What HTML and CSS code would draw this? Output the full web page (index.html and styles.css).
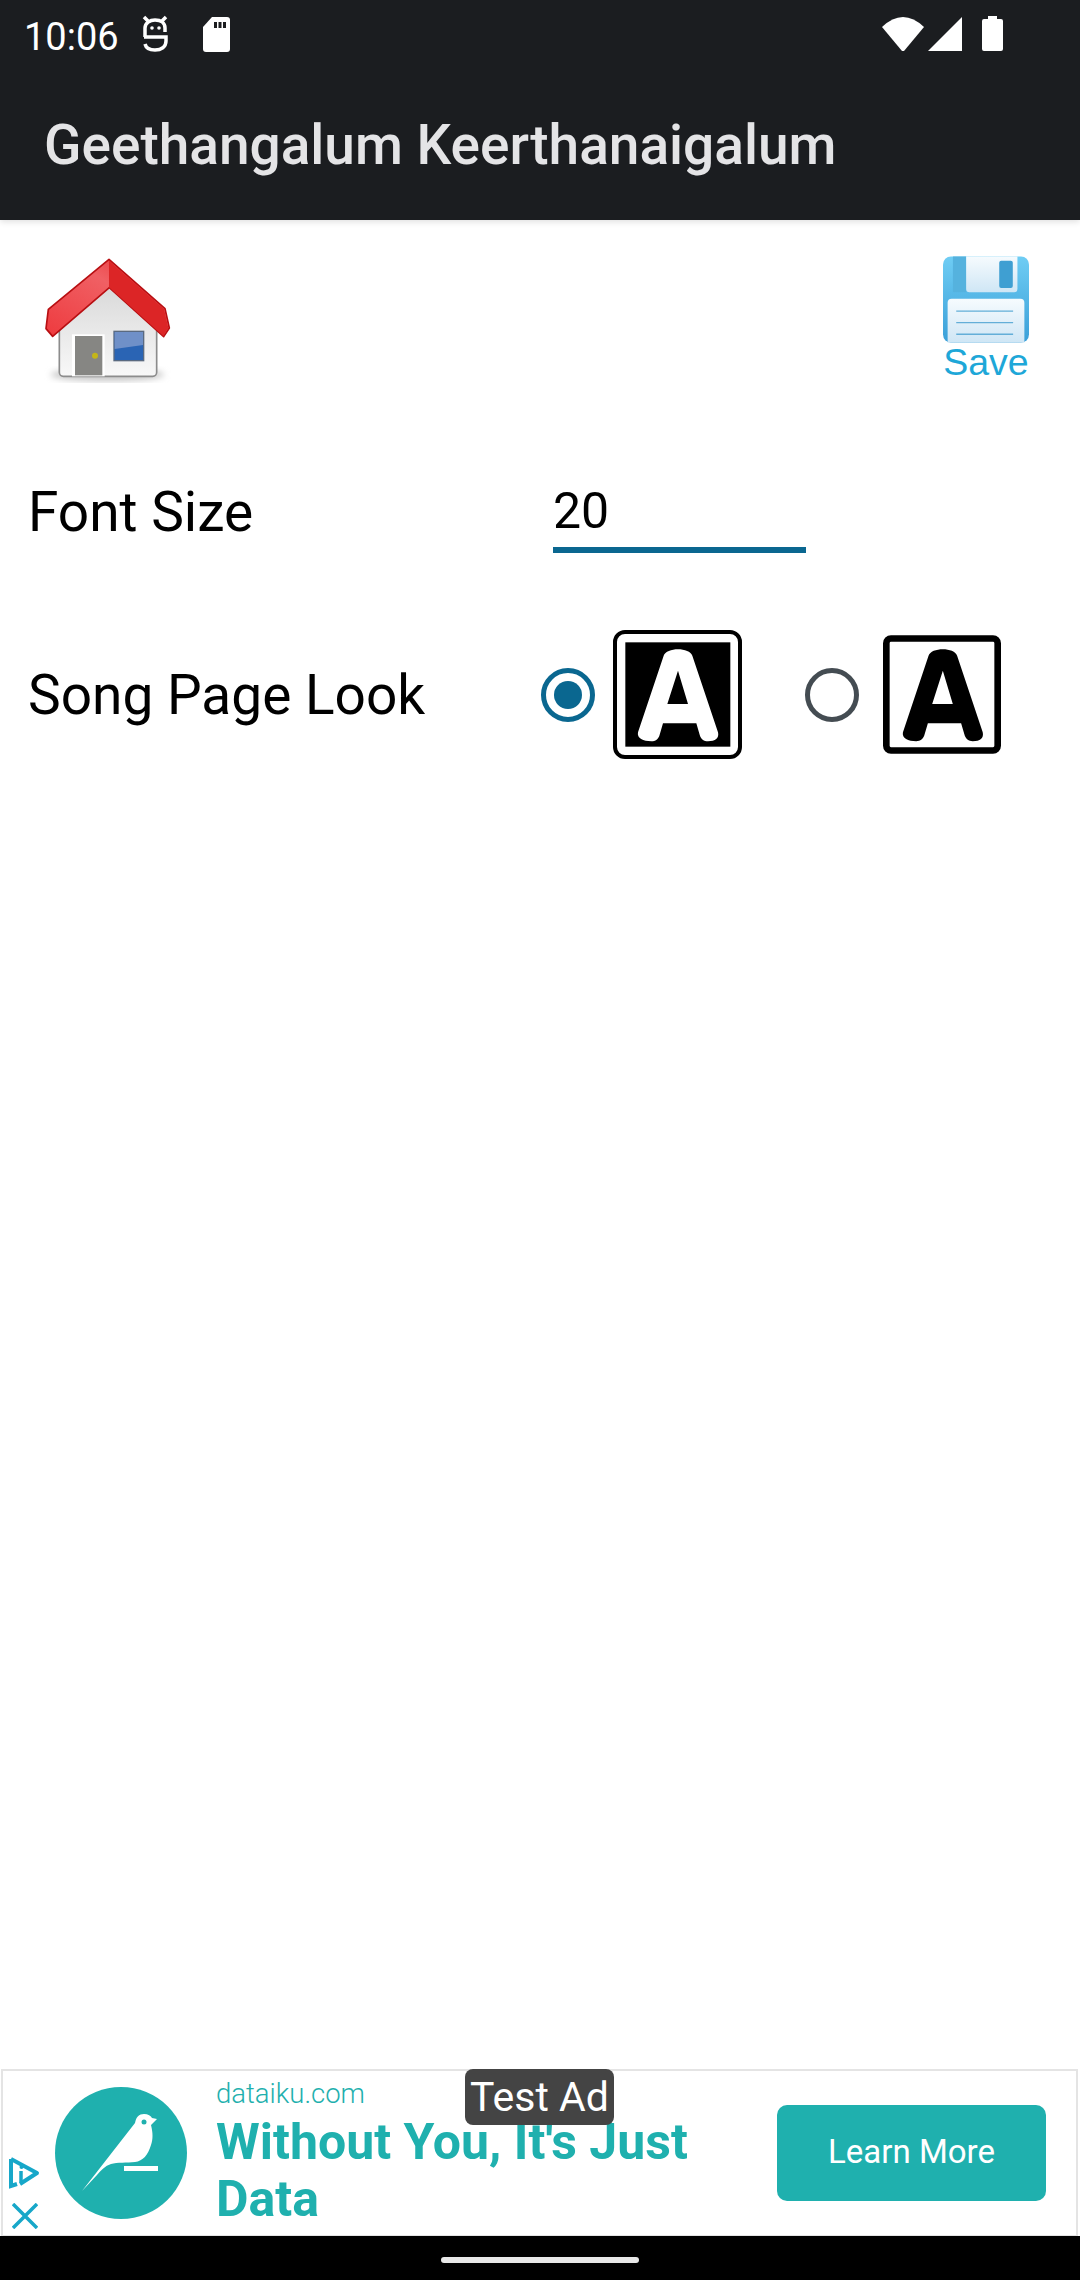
FILE: index.html
```html
<!DOCTYPE html>
<html lang="en">
<head>
    <meta charset="UTF-8">
    <meta name="viewport" content="width=device-width, initial-scale=1.0">
    <title>Geethangalum Keerthanaigalum</title>
    <link rel="stylesheet" href="styles.css">
</head>
<body>
    <div id="top-bar">
        <div class="status-bar">
            <span class="clock">10:06</span>
            <svg class="status-left-icon" width="110" height="54" viewBox="0 0 110 54">
                <g fill="none" stroke="#fff" stroke-width="3.500">
                    <path d="M15 29v-9c0-5 5-8 10-8 6 0 10 3 10 8v4"/>
                    <path d="M14 9l4 4M36 9l-4 4"/>
                    <path d="M14 29h22v4c0 6-5 9-11 9-5 0-9-2-10-6"/>
                </g>
                <circle cx="22" cy="20" r="1.800" fill="#fff"/>
                <circle cx="29" cy="20" r="1.800" fill="#fff"/>
                <path fill="#fff" d="M82 9h15a3 3 0 0 1 3 3v29a3 3 0 0 1-3 3H76a3 3 0 0 1-3-3V19z"/>
                <path fill="#1b1d20" d="M84 14h3v6h-3zM88.500 14h3v6h-3zM93 14h3v6h-3z"/>
            </svg>
            <svg class="status-right-icon" width="140" height="54" viewBox="0 0 140 54">
                <path fill="#fff" d="M7 19Q28-1 49 19L29 43h-2z"/>
                <path fill="#fff" d="M87 9v34H53z"/>
                <path fill="#fff" d="M113 8h9v3h4a2 2 0 0 1 2 2v28a2 2 0 0 1-2 2h-17a2 2 0 0 1-2-2V13a2 2 0 0 1 2-2h4z"/>
            </svg>
        </div>
        <div class="app-title">Geethangalum Keerthanaigalum</div>
    </div>

    <div id="settings">
        <div class="action-row">
            <svg class="home-icon" width="170" height="160" viewBox="0 0 510 480">
                <defs>
                    <linearGradient id="roof-left" x1="0" y1="1" x2="1" y2="0">
                        <stop offset="0" stop-color="#ee3a3e"/>
                        <stop offset="0.6" stop-color="#f06064"/>
                        <stop offset="1" stop-color="#e8282a"/>
                    </linearGradient>
                    <linearGradient id="wall" x1="0" y1="0" x2="0" y2="1">
                        <stop offset="0" stop-color="#d8d8d8"/>
                        <stop offset="1" stop-color="#f8f8f8"/>
                    </linearGradient>
                    <filter id="soft"><feGaussianBlur stdDeviation="9"/></filter>
                </defs>
                <ellipse cx="262" cy="404" rx="170" ry="20" fill="#c9c9c9" filter="url(#soft)"/>
                <path d="M118 270L268 130l142 135v132a12 12 0 0 1-12 12H130a12 12 0 0 1-12-12z" fill="url(#wall)" stroke="#8c8c8c" stroke-width="5"/>
                <rect x="156" y="283" width="98" height="126" fill="#fff"/>
                <rect x="165" y="288" width="82" height="118" fill="#868683"/>
                <circle cx="225" cy="347" r="9" fill="#c4b618"/>
                <rect x="282" y="274" width="89" height="88" fill="#2a64b4" stroke="#5a6a80" stroke-width="4"/>
                <path d="M284 276h85v39l-85 12z" fill="#6f90c8"/>
                <path d="M267 58L85 208l-7 58 20 23 170-146 163 147 17-26-13-58z" fill="url(#roof-left)" stroke="#b80f12" stroke-width="5" stroke-linejoin="round"/>
                <path d="M267 62v80l163 146 15-24-13-57z" fill="#dc2526"/>
            </svg>
            <div class="save-btn">
                <svg width="86" height="87" viewBox="0 0 260 260">
                    <defs>
                        <linearGradient id="disk" x1="0" y1="0" x2="0" y2="1">
                            <stop offset="0" stop-color="#6fcdf4"/>
                            <stop offset="1" stop-color="#3a9fd8"/>
                        </linearGradient>
                        <linearGradient id="paper" x1="0" y1="0" x2="0" y2="1">
                            <stop offset="0" stop-color="#f6fbfe"/>
                            <stop offset="1" stop-color="#cfe6f5"/>
                        </linearGradient>
                    </defs>
                    <rect width="260" height="260" rx="24" fill="url(#disk)"/>
                    <rect x="30" width="40" height="108" fill="#55b2de"/>
                    <path d="M70 0h155v98a10 10 0 0 1-10 10H80a10 10 0 0 1-10-10z" fill="url(#paper)"/>
                    <rect x="170" y="13" width="41" height="82" rx="6" fill="#3f9fd2"/>
                    <path d="M14 260V140a12 12 0 0 1 12-12h208a12 12 0 0 1 12 12v120z" fill="url(#paper)"/>
                    <path d="M40 165h172M40 200h172M40 235h172" stroke="#63aed8" stroke-width="4"/>
                </svg>
                <span>Save</span>
            </div>
        </div>

        <div class="setting-row font-row">
            <label class="setting-label" for="font-size">Font Size</label>
            <div class="size-field" id="font-size">20</div>
        </div>

        <div class="setting-row look-row">
            <span class="setting-label">Song Page Look</span>
            <div class="look-options">
                <span class="radio checked"></span>
                <svg class="look-dark" width="129" height="129" viewBox="0 0 387 387">
                    <rect x="6" y="6" width="375" height="375" rx="30" fill="#fff" stroke="#000" stroke-width="12"/>
                    <rect x="37" y="37" width="315" height="313" fill="#000"/>
                    <path fill="#fff" fill-rule="evenodd" d="M75 307L152 77c8-26 78-26 86 0l77 230c4 18-8 27-30 27-12 0-22-7-25-20l-10-34H150l-10 34c-3 13-13 20-25 20-24 0-44-9-40-27zM195 122l-32 100h62z"/>
                </svg>
                <span class="radio"></span>
                <svg class="look-light" width="118" height="119" viewBox="0 0 355 357">
                    <rect x="10" y="10" width="335" height="337" rx="14" fill="#fff" stroke="#000" stroke-width="20"/>
                    <path fill="#000" fill-rule="evenodd" d="M60 292L137 62c8-26 78-26 86 0l77 230c4 18-8 27-30 27-12 0-22-7-25-20l-10-34H135l-10 34c-3 13-13 20-25 20-24 0-44-9-40-27zM180 107l-32 100h62z"/>
                </svg>
            </div>
        </div>
    </div>

    <div id="ad-banner">
        <div class="ad-side">
            <svg width="32" height="32" viewBox="0 0 32 32">
                <path d="M2 2l26 14-17 11" fill="none" stroke="#17a7c9" stroke-width="4" stroke-linejoin="round"/>
                <path d="M2 2v27l6-2" fill="none" stroke="#17a7c9" stroke-width="4"/>
                <path d="M12 14v11" stroke="#17a7c9" stroke-width="3.500"/>
                <circle cx="12.500" cy="10" r="2" fill="#17a7c9"/>
            </svg>
            <svg width="26" height="26" viewBox="0 0 26 26">
                <path d="M1 1l24 24M25 1L1 25" stroke="#17a7c9" stroke-width="3.500"/>
            </svg>
        </div>
        <svg class="ad-logo" width="132" height="132" viewBox="0 0 132 132">
            <circle cx="66" cy="66" r="66" fill="#1fb0ae"/>
            <path fill="#fff" d="M27 104L80 36c1-6 4-9 9-9 4 0 7 2 8 4l5 1-6 6c2 8 2 14 0 20-3 10-8 16-16 17-8 1-18 0-24 2-6 2-10 6-14 11z"/>
            <rect x="69" y="79" width="34" height="5" fill="#fff"/>
            <circle cx="89" cy="35" r="2.500" fill="#1fb0ae"/>
        </svg>
        <div class="ad-copy">
            <div class="ad-domain">dataiku.com</div>
            <div class="ad-headline">Without You, It's Just Data</div>
        </div>
        <div class="ad-button">Learn More</div>
        <div class="test-tag">Test Ad</div>
    </div>

    <div id="nav-bar"><div class="nav-pill"></div></div>
</body>
</html>
```

FILE: styles.css
```css
body {
    margin: 0;
    width: 1080px;
    height: 2280px;
    overflow: hidden;
    display: flex;
    flex-direction: column;
    font-family: Roboto, sans-serif;
    background-color: #fff;
    color: #000;
}

#top-bar {
    height: 220px;
    flex-shrink: 0;
    background-color: #1b1d20;
    box-shadow: 0 2px 6px rgba(0, 0, 0, 0.12);
}

.status-bar {
    height: 70px;
    display: flex;
    align-items: flex-start;
    padding-left: 24px;
    color: #fff;
}

.clock {
    font-size: 38px;
    line-height: 38px;
    margin-top: 18px;
    width: 106px;
}

.status-left-icon {
    margin-top: 8px;
}

.status-right-icon {
    margin-top: 8px;
    margin-left: auto;
    margin-right: 65px;
}

.app-title {
    margin-top: 45px;
    margin-left: 44px;
    font-size: 55px;
    line-height: 60px;
    font-weight: 500;
    color: #e4e4e6;
    white-space: nowrap;
}

#settings {
    flex: 1;
}

.action-row {
    display: flex;
    justify-content: space-between;
    align-items: flex-start;
    padding: 20px 51px 0 20px;
}

.save-btn {
    display: flex;
    flex-direction: column;
    align-items: center;
    margin-top: 16px;
    font-family: "Liberation Sans", Arial, sans-serif;
    font-size: 37.500px;
    line-height: 36px;
    color: #1ea7d8;
}

.save-btn span {
    margin-top: 1px;
}

.setting-row {
    display: flex;
    padding-left: 28px;
}

.setting-label {
    font-size: 55px;
    line-height: 60px;
    width: 525px;
    white-space: nowrap;
}

.font-row {
    margin-top: 82px;
}

.size-field {
    width: 253px;
    height: 65px;
    font-size: 50px;
    line-height: 58px;
    border-bottom: 6px solid #0a6790;
}

.look-row {
    margin-top: 77px;
    align-items: center;
}

.look-row .setting-label {
    width: 513px;
    margin-top: 0;
}

.look-options {
    display: flex;
    align-items: center;
}

.radio {
    width: 44px;
    height: 44px;
    border: 5px solid #444c52;
    border-radius: 50%;
    flex-shrink: 0;
    position: relative;
}

.radio.checked {
    border-color: #0a6790;
}

.radio.checked::after {
    content: "";
    position: absolute;
    left: 8px;
    top: 8px;
    width: 28px;
    height: 28px;
    border-radius: 50%;
    background-color: #0a6790;
}

.look-dark {
    margin-left: 18px;
    margin-right: 63px;
}

.look-light {
    margin-left: 24px;
}

#ad-banner {
    height: 167px;
    flex-shrink: 0;
    box-sizing: border-box;
    position: relative;
    display: flex;
    align-items: flex-start;
    margin: 0 2px 0 1px;
    border: 2px solid #e4e4e4;
    border-bottom-width: 1px;
}

.ad-side {
    width: 52px;
    height: 100%;
    flex-shrink: 0;
    box-sizing: border-box;
    padding: 86px 0 0 6px;
    display: flex;
    flex-direction: column;
    gap: 14px;
}

.ad-side svg {
    display: block;
}

.ad-side svg:last-child {
    margin-left: 3px;
}

.ad-logo {
    flex-shrink: 0;
    margin-top: 16px;
}

.ad-copy {
    width: 500px;
    margin-left: 29px;
    flex-shrink: 0;
    color: #1fb0ae;
}

.ad-domain {
    font-size: 27.500px;
    line-height: 30px;
    font-weight: 300;
    margin-top: 8px;
}

.ad-headline {
    font-size: 50px;
    line-height: 57px;
    font-weight: 700;
    margin-top: 5px;
}

.ad-button {
    width: 269px;
    height: 96px;
    margin-left: 61px;
    margin-top: 34px;
    flex-shrink: 0;
    border-radius: 10px;
    background-color: #1fb0ae;
    color: #fff;
    font-size: 33px;
    line-height: 94px;
    text-align: center;
}

.test-tag {
    position: absolute;
    left: 462px;
    top: -2px;
    width: 149px;
    height: 56px;
    border-radius: 8px;
    background-color: #444;
    color: #fff;
    font-size: 41px;
    line-height: 56px;
    text-align: center;
}

#nav-bar {
    height: 44px;
    flex-shrink: 0;
    background-color: #000;
    display: flex;
    justify-content: center;
    padding-top: 21px;
    box-sizing: border-box;
}

.nav-pill {
    width: 198px;
    height: 6px;
    border-radius: 3px;
    background-color: #e8e8e8;
}
```
